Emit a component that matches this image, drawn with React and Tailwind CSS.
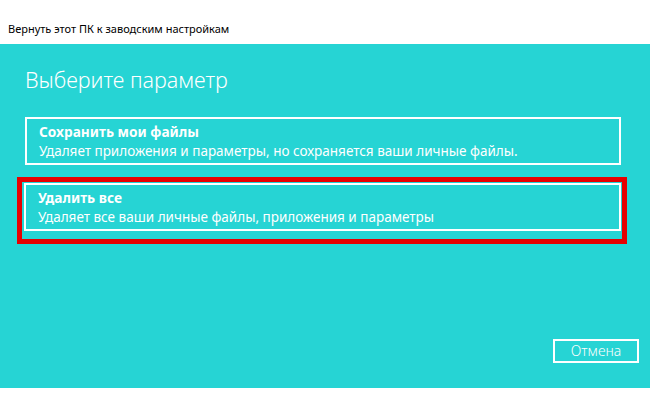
import React from "react";

const OPTIONS = [
  {
    title: "Сохранить мои файлы",
    text: "Удаляет приложения и параметры, но сохраняется ваши личные файлы.",
  },
  {
    title: "Удалить все",
    text: "Удаляет все ваши личные файлы, приложения и параметры",
  },
];

const Option = ({ title, text, className = "" }) => (
  <div className={`border-2 border-white pl-[12px] pt-[3px] h-[48px] ${className}`}>
    <p className="text-[13.7px] font-bold leading-[19px] text-white whitespace-nowrap">{title}</p>
    <p className="text-[13.5px] leading-[20px] text-white whitespace-nowrap">{text}</p>
  </div>
);

export default function App() {
  return (
    <div
      className="w-[650px] h-[404px] bg-white flex flex-col"
      style={{ fontFamily: '"Noto Sans", "Open Sans", sans-serif' }}
    >
      {/* Window title */}
      <div className="h-[44px] px-[8px] pt-[22px]">
        <p className="text-[11px] leading-[14px] text-black whitespace-nowrap">
          Вернуть этот ПК к заводским настройкам
        </p>
      </div>

      {/* Teal panel */}
      <div className="h-[344px] bg-[#26d4d4] flex flex-col pb-[25px]">
        <h1 className="ml-[25px] mt-[21px] text-[21.5px] font-light leading-[30px] text-white">
          Выберите параметр
        </h1>

        <Option {...OPTIONS[0]} className="ml-[25px] w-[596px] mt-[22px]" />

        <div className="ml-[17px] w-[610px] mt-[12px] border-[5px] border-[#e60000] pl-[2px] pt-[1px] pr-[1px] pb-[8px]">
          <Option {...OPTIONS[1]} className="w-[597px]" />
        </div>

        <div className="mt-auto flex justify-end pr-[11px]">
          <button className="w-[86px] h-[24px] border-2 border-white text-[14px] font-light leading-[18px] text-white">
            Отмена
          </button>
        </div>
      </div>
    </div>
  );
}
